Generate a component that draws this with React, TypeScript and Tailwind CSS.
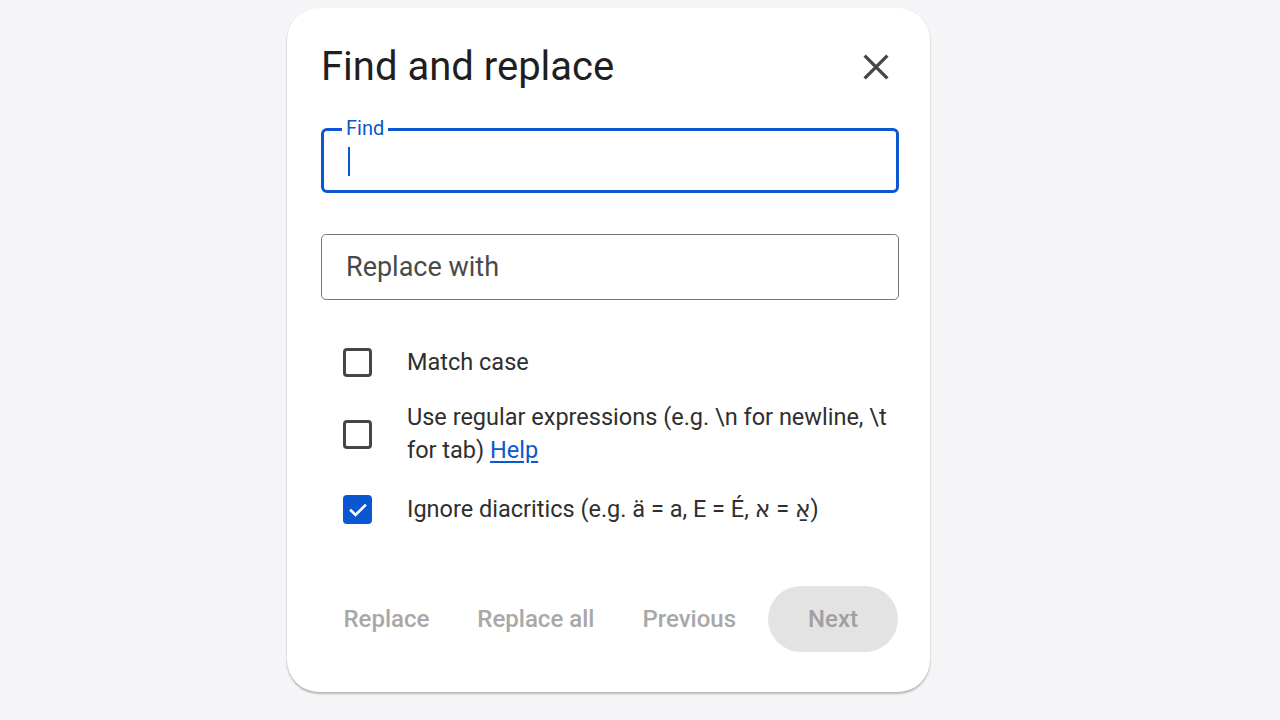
import React from 'react';

const font = { fontFamily: 'Roboto, "DejaVu Sans", Arial, sans-serif' };

interface OptionProps {
  checked?: boolean;
  className?: string;
  children: React.ReactNode;
}

const CheckIcon = () => (
  <svg viewBox="0 0 24 24" className="w-[24px] h-[24px]" fill="none">
    <path d="M5 12.5l4.5 4.5L19 7.5" stroke="white" strokeWidth="2.6" strokeLinecap="square" />
  </svg>
);

const Option: React.FC<OptionProps> = ({ checked, className, children }) => (
  <div className={'flex items-center ' + (className ?? '')}>
    <div className="w-[86px] pl-[22px] flex items-center shrink-0">
      {checked ? (
        <div className="w-[29px] h-[29px] rounded-[4px] bg-[#0b57d0] flex items-center justify-center">
          <CheckIcon />
        </div>
      ) : (
        <div className="w-[29px] h-[29px] rounded-[4px] border-[3px] border-[#444746]" />
      )}
    </div>
    <div className="text-[23.5px] leading-[33px] text-[#2f2f2f]">{children}</div>
  </div>
);

export default function App() {
  return (
    <div className="min-h-[720px] w-full bg-[#f5f4f7] pl-[287px] pt-[8px]" style={font}>
      <div className="w-[643px] h-[684px] bg-white rounded-[32px] pl-[34px] pr-[31px] pt-[37px] shadow-[0_2px_2px_rgba(0,0,0,0.25),0_0_2px_rgba(0,0,0,0.06)]">
        {/* header */}
        <div className="flex items-center justify-between h-[44px]">
          <h2 className="text-[40px] leading-[44px] text-[#1f1f1f]">Find and replace</h2>
          <svg viewBox="0 0 24 24" className="w-[42px] h-[42px] mr-[2px]" fill="none">
            <path d="M5.5 5.5l13 13M18.5 5.5l-13 13" stroke="#444746" strokeWidth="1.9" />
          </svg>
        </div>

        {/* find field */}
        <div className="relative mt-[39px] h-[65px] border-[3px] border-[#0b57d0] rounded-[6px]">
          <span className="absolute left-[18px] top-[-15px] bg-white px-[4px] text-[20px] leading-[24px] text-[#0b57d0]">
            Find
          </span>
          <span className="absolute left-[24px] top-[16px] w-[2px] h-[29px] bg-[#0b57d0]" />
        </div>

        {/* replace field */}
        <div className="mt-[41px] h-[66px] border border-[#747775] rounded-[5px] flex items-center pl-[24px]">
          <span className="text-[27px] text-[#4a4a4a]">Replace with</span>
        </div>

        {/* options */}
        <div className="mt-[46px] flex flex-col">
          <Option>Match case</Option>
          <Option className="mt-[22px]">
            Use regular expressions (e.g. \n for newline, \t
            <br />
            for tab) <span className="text-[#0b57d0] underline underline-offset-[3px]">Help</span>
          </Option>
          <Option checked className="mt-[26px]">
            Ignore diacritics (e.g. ä = a, E = É, אַ = א)
          </Option>
        </div>

        {/* actions */}
        <div className="mt-[60px] flex items-center justify-end gap-[12px] text-[24px] font-medium text-[#a8a8a8]">
          <button className="h-[66px] px-[18px]">Replace</button>
          <button className="h-[66px] px-[18px]">Replace all</button>
          <button className="h-[66px] px-[18px] mr-[2px]">Previous</button>
          <button className="h-[66px] w-[130px] mr-[1px] rounded-full bg-[#e3e3e3] text-[#a0a0a0]">Next</button>
        </div>
      </div>
    </div>
  );
}
